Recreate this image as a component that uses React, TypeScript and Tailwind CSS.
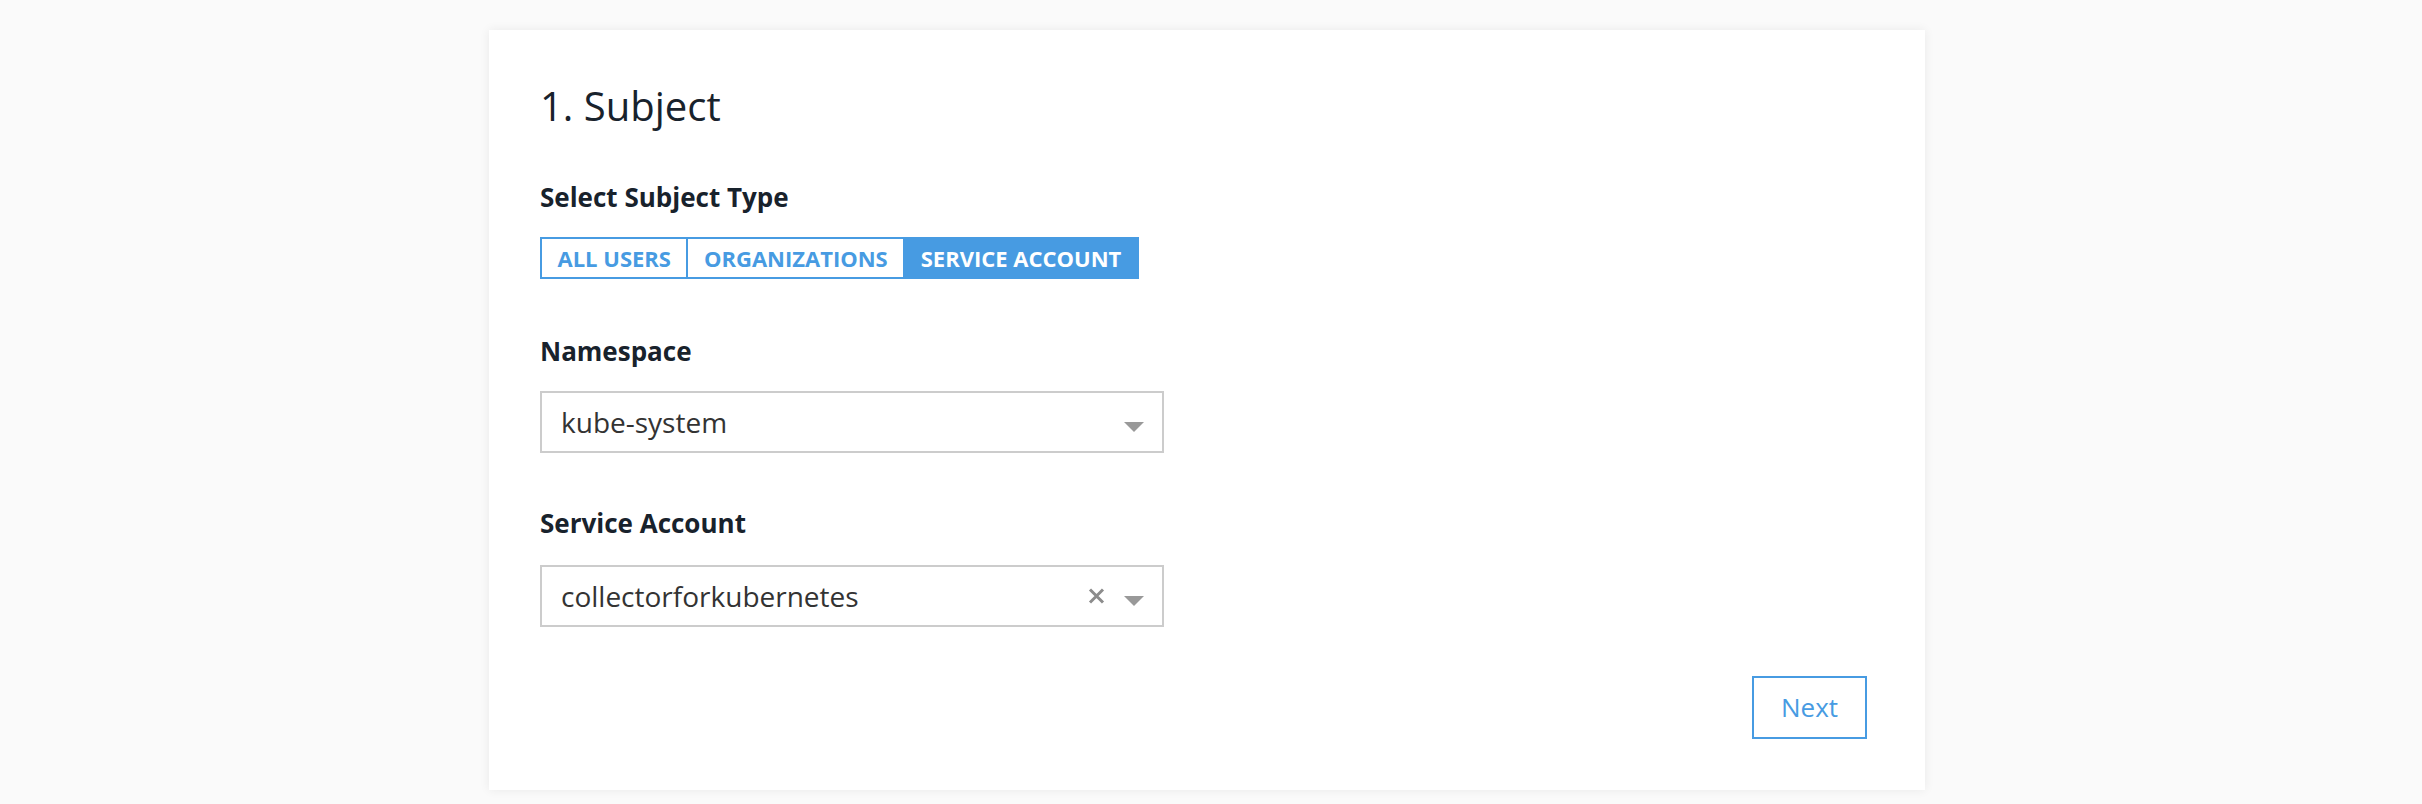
import { useState } from 'react'

const subjectTypes = ['ALL USERS', 'ORGANIZATIONS', 'SERVICE ACCOUNT']

function Caret() {
  return (
    <svg width="20" height="10" viewBox="0 0 20 10" className="mt-[10px] shrink-0">
      <path d="M0 0 L20 0 L10 10 Z" fill="#999999" />
    </svg>
  )
}

function ClearIcon() {
  return (
    <svg width="17" height="16" viewBox="0 0 17 16" className="shrink-0">
      <path d="M2 1.5 L15 14.5 M15 1.5 L2 14.5" stroke="#8c8c8c" strokeWidth="3" />
    </svg>
  )
}

interface SelectBoxProps {
  value: string
  clearable?: boolean
}

function SelectBox({ value, clearable }: SelectBoxProps) {
  return (
    <div className="flex items-center w-[624px] h-[62px] border-2 border-[#cccccc] bg-white pl-[19px] pr-[18px]">
      <span className="flex-1 text-[28px] leading-[34px] text-[#333333]">{value}</span>
      {clearable && (
        <div className="mr-[19px]">
          <ClearIcon />
        </div>
      )}
      <Caret />
    </div>
  )
}

export default function App() {
  const [active, setActive] = useState('SERVICE ACCOUNT')

  return (
    <div className="min-h-[804px] bg-[#fafafa] pt-[30px]" style={{ fontFamily: '"Open Sans", "Noto Sans", sans-serif' }}>
      <div className="ml-[489px] w-[1436px] bg-white shadow-[0_0_10px_rgba(0,0,0,0.07)] pt-[52px] pb-[51px] pl-[51px] pr-[58px]">
        {/* Title */}
        <h2 className="text-[40px] leading-[48px] font-normal text-[#18222c]">1. Subject</h2>

        {/* Subject type */}
        <div className="mt-[51px] text-[26px] leading-[32px] font-bold text-[#18222c]">Select Subject Type</div>
        <div className="mt-[24px] inline-flex border-2 border-[#479be2]">
          {subjectTypes.map((type, i) => (
            <button
              key={type}
              onClick={() => setActive(type)}
              className={`h-[38px] px-[15.5px] text-[22px] leading-[38px] font-bold ${
                i < subjectTypes.length - 1 ? 'border-r-2 border-[#479be2]' : ''
              } ${active === type ? 'bg-[#479be2] text-white' : 'bg-white text-[#479be2]'}`}
            >
              {type}
            </button>
          ))}
        </div>

        {/* Namespace */}
        <div className="mt-[56px] text-[26px] leading-[32px] font-bold text-[#18222c]">Namespace</div>
        <div className="mt-[24px]">
          <SelectBox value="kube-system" />
        </div>

        {/* Service account */}
        <div className="mt-[54px] text-[26px] leading-[32px] font-bold text-[#18222c]">Service Account</div>
        <div className="mt-[26px]">
          <SelectBox value="collectorforkubernetes" clearable />
        </div>

        {/* Footer */}
        <div className="mt-[49px] flex justify-end">
          <button className="w-[115px] h-[63px] border-2 border-[#479be2] bg-white text-[26px] text-[#479be2]">
            Next
          </button>
        </div>
      </div>
    </div>
  )
}
